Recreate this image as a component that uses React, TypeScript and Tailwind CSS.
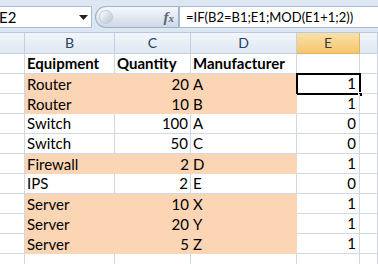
import React from "react";

type Row = { b: string; c: string; d: string; e: string; fill: boolean };

const rows: Row[] = [
  { b: "Router", c: "20", d: "A", e: "1", fill: true },
  { b: "Router", c: "10", d: "B", e: "1", fill: true },
  { b: "Switch", c: "100", d: "A", e: "0", fill: false },
  { b: "Switch", c: "50", d: "C", e: "0", fill: false },
  { b: "Firewall", c: "2", d: "D", e: "1", fill: true },
  { b: "IPS", c: "2", d: "E", e: "0", fill: false },
  { b: "Server", c: "10", d: "X", e: "1", fill: true },
  { b: "Server", c: "20", d: "Y", e: "1", fill: true },
  { b: "Server", c: "5", d: "Z", e: "1", fill: true },
];

const cols = "grid grid-cols-[25px_90px_76px_106px_63px_18px]";
const grid = "border-r border-b border-[#d0d7e5]";

const ColHead = ({ label, active }: { label: string; active?: boolean }) => (
  <div
    className={`h-[21px] flex items-center justify-center border-r border-b text-[14px] ${
      active
        ? "bg-gradient-to-b from-[#fbe0a8] to-[#f5c66c] border-[#e2b25c] text-[#3c3c3c]"
        : "bg-gradient-to-b from-[#f3f6fb] to-[#dfe7f2] border-[#c5d1e2] text-[#27415f]"
    }`}
  >
    {label}
  </div>
);

const App = () => {
  return (
    <div className="w-[378px] h-[264px] overflow-hidden bg-white font-['Lato','Liberation_Sans',sans-serif] text-[15px] text-black leading-none">
      {/* formula bar */}
      <div className="h-[33px] bg-[#dde7f3] flex items-center pt-[2px] border-b border-[#b9c9dd]">
        <div className="w-[92px] h-[22px] bg-white border border-[#a9bbd2] border-l-0 flex items-center justify-between pr-[3px]">
          <span className="-ml-[1px] text-[15px]">E2</span>
          <svg width="9" height="5" viewBox="0 0 9 5">
            <path d="M0 0h9L4.5 5z" fill="#222" />
          </svg>
        </div>
        <div className="ml-[3px] w-[84px] h-[22px] rounded-l-full rounded-r-[3px] border border-[#9fb1c8] bg-gradient-to-b from-[#f6f8fc] to-[#cfd9e8] flex items-center justify-between pl-[3px] pr-[4px]">
          <div className="w-[14px] h-[14px] rounded-full bg-gradient-to-br from-[#ffffff] to-[#b8c3d2] border border-[#c3ccd9]" />
          <span className="font-['Liberation_Serif',serif] italic font-bold text-[15px] text-[#5d6776]">
            f<span className="text-[11px]">x</span>
          </span>
        </div>
        <div className="flex-1 h-[22px] bg-white border border-[#a9bbd2] border-r-0 flex items-center pl-[6px] text-[13px] whitespace-nowrap">
          =IF(B2=B1;E1;MOD(E1+1;2))
        </div>
      </div>

      {/* column headers */}
      <div className={cols}>
        <ColHead label="" />
        <ColHead label="B" />
        <ColHead label="C" />
        <ColHead label="D" />
        <ColHead label="E" active />
        <ColHead label="" />
      </div>

      {/* header row */}
      <div className={`${cols} h-5`}>
        <div className={grid} />
        <div className={`${grid} font-bold flex items-center pl-[2px]`}>Equipment</div>
        <div className={`${grid} font-bold flex items-center pl-[2px]`}>Quantity</div>
        <div className={`${grid} font-bold flex items-center pl-[2px]`}>Manufacturer</div>
        <div className={grid} />
        <div className={grid} />
      </div>

      {rows.map((r, i) => (
        <div key={i} className={`${cols} h-5 relative`}>
          <div className={grid} />
          <div className={`flex items-center pl-[2px] ${r.fill ? "bg-[#fcd5b4]" : grid}`}>{r.b}</div>
          <div className={`flex items-center justify-end pr-[2px] ${r.fill ? "bg-[#fcd5b4]" : grid}`}>{r.c}</div>
          <div className={`flex items-center pl-[2px] ${r.fill ? "bg-[#fcd5b4]" : grid}`}>{r.d}</div>
          <div className={`${grid} flex items-center justify-end pr-[3px]`}>{r.e}</div>
          <div className={grid} />
          {i === 0 && (
            <div className="absolute left-[296px] top-[-1px] w-[65px] h-[22px] border-2 border-black">
              <div className="absolute right-[-4px] bottom-[-4px] w-[5px] h-[5px] bg-black border border-white" />
            </div>
          )}
        </div>
      ))}

      <div className={`${cols} h-5`}>
        <div className={grid} />
        <div className={grid} />
        <div className={grid} />
        <div className={grid} />
        <div className={grid} />
        <div className={grid} />
      </div>
    </div>
  );
};

export default App;
